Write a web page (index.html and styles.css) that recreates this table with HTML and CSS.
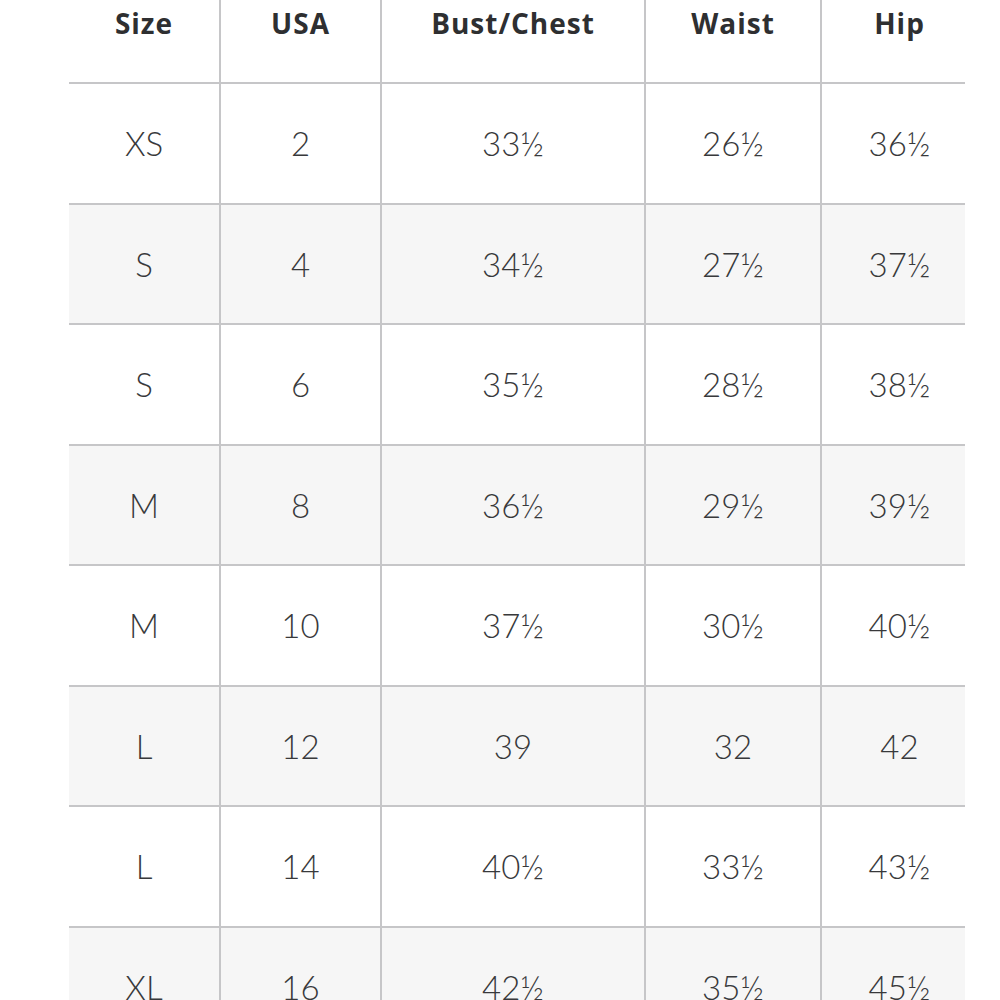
FILE: index.html
```html
<!DOCTYPE html>
<html>
<head>
<meta charset="utf-8">
<link rel="stylesheet" href="styles.css">
</head>
<body>
<div class="page">
  <div class="chart">
    <div class="cell head">Size</div>
    <div class="cell head">USA</div>
    <div class="cell head">Bust/Chest</div>
    <div class="cell head">Waist</div>
    <div class="cell head last">Hip</div>

    <div class="cell">XS</div><div class="cell">2</div><div class="cell">33½</div><div class="cell">26½</div><div class="cell last">36½</div>
    <div class="cell alt">S</div><div class="cell alt">4</div><div class="cell alt">34½</div><div class="cell alt">27½</div><div class="cell alt last">37½</div>
    <div class="cell">S</div><div class="cell">6</div><div class="cell">35½</div><div class="cell">28½</div><div class="cell last">38½</div>
    <div class="cell alt">M</div><div class="cell alt">8</div><div class="cell alt">36½</div><div class="cell alt">29½</div><div class="cell alt last">39½</div>
    <div class="cell">M</div><div class="cell">10</div><div class="cell">37½</div><div class="cell">30½</div><div class="cell last">40½</div>
    <div class="cell alt">L</div><div class="cell alt">12</div><div class="cell alt">39</div><div class="cell alt">32</div><div class="cell alt last">42</div>
    <div class="cell">L</div><div class="cell">14</div><div class="cell">40½</div><div class="cell">33½</div><div class="cell last">43½</div>
    <div class="cell alt">XL</div><div class="cell alt">16</div><div class="cell alt">42½</div><div class="cell alt">35½</div><div class="cell alt last">45½</div>
  </div>
</div>
</body>
</html>
```

FILE: styles.css
```css
html, body {
  margin: 0;
  padding: 0;
  background: #ffffff;
  overflow: hidden;
}
.page {
  width: 1000px;
  height: 1000px;
  overflow: hidden;
  padding-left: 69px;
  box-sizing: border-box;
}
.chart {
  margin-top: -36.5px;
  display: grid;
  grid-template-columns: 152px 161px 264px 176px 143px;
  grid-auto-rows: 120.5px;
  font-family: Lato, "Open Sans", sans-serif;
  color: #38393b;
}
.cell {
  display: flex;
  align-items: center;
  justify-content: center;
  border-right: 2px solid #c6c6c8;
  border-bottom: 2px solid #c6c6c8;
  box-sizing: border-box;
  font-size: 33px;
  font-weight: 300;
}
.cell.last {
  border-right: none;
  padding-left: 12px;
}
.cell.alt {
  background: #f6f6f6;
}
.cell.head {
  font-family: "Open Sans", Lato, sans-serif;
  font-size: 28px;
  font-weight: 700;
  letter-spacing: 1px;
  color: #2e2f31;
  padding-top: 0;
}
.cell.head.last {
  padding-left: 12px;
}
```
